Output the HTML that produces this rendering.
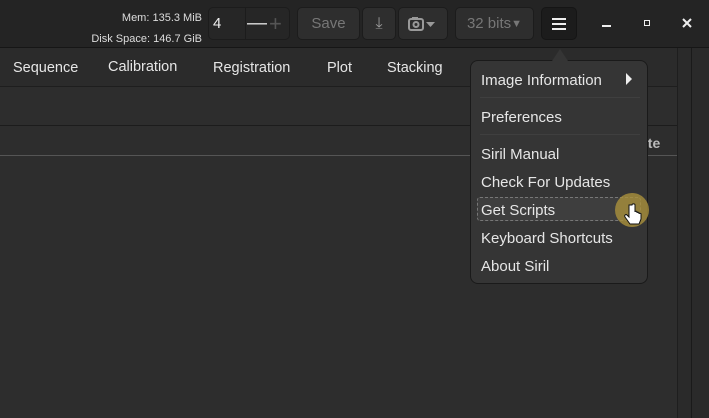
<!DOCTYPE html><html><head><style>
body{margin:0;width:709px;height:418px;background:#2d2d2d;font-family:"Liberation Sans",sans-serif;overflow:hidden;position:relative;color:#ddd}
.a{position:absolute}
.btn{position:absolute;top:7px;height:33px;background:#2e2e2e;border:1px solid #1c1c1c;border-radius:5px;box-sizing:border-box;color:#777;font-size:15px;display:flex;align-items:center;justify-content:center}
.mi{position:absolute;left:481px;font-size:15px;color:#e6e6e6}
.tab{position:absolute;font-size:14.5px;color:#e6e6e6}
</style></head><body>
<div class="a" style="left:0;top:0;width:709px;height:47px;background:#242424;border-bottom:1px solid #161616"></div>
<div class="a" style="left:0;top:48px;width:709px;height:38px;background:#2b2b2b;border-bottom:1px solid #1e1e1e"></div>
<div class="a" style="right:507px;top:8px;font-size:11px;color:#ddd;text-align:right;line-height:21px;width:200px">Mem: 135.3 MiB<br>Disk Space: 146.7 GiB</div>
<div class="btn" style="left:208px;width:82px;justify-content:flex-start;padding-left:4px;color:#eee;background:#262626">4<span style="position:absolute;left:36px;top:0;height:31px;width:1px;background:#1c1c1c"></span><span style="position:absolute;left:38px;font-size:20px;color:#ddd">—</span><span style="position:absolute;left:60px;font-size:22px;color:#555">+</span></div>
<div class="btn" style="left:297px;width:63px">Save</div>
<div class="btn" style="left:362px;width:34px;color:#999;font-size:16px">⤓</div>
<div class="btn" style="left:398px;width:50px;color:#999"><svg width="30" height="16"><rect x="1" y="3" width="14" height="11" rx="2" fill="none" stroke="#999" stroke-width="2"/><rect x="4" y="1" width="6" height="3" fill="#999"/><circle cx="8" cy="8.5" r="2.5" fill="none" stroke="#999" stroke-width="2"/><path d="M18 6h9l-4.5 5z" fill="#999"/></svg></div>
<div class="btn" style="left:455px;width:79px">32 bits<span style="font-size:11px">▼</span></div>
<div class="btn" style="left:541px;width:36px;background:#1c1c1c;border-color:#151515"><svg width="14" height="12"><path d="M0 1h14M0 6h14M0 11h14" stroke="#eee" stroke-width="2"/></svg></div>
<div class="a" style="left:602px;top:25px;width:9px;height:2px;background:#eee"></div>
<div class="a" style="left:644px;top:20px;width:6px;height:6px;border:1.5px solid #eee;box-sizing:border-box"></div>
<svg class="a" style="left:682px;top:18px" width="10" height="10"><path d="M1 1L9 9M9 1L1 9" stroke="#eee" stroke-width="2"/></svg>
<div class="tab" style="top:60px;left:13px">Sequence</div>
<div class="tab" style="top:59px;left:108px">Calibration</div>
<div class="tab" style="top:60px;left:213px">Registration</div>
<div class="tab" style="top:60px;left:327px">Plot</div>
<div class="tab" style="top:60px;left:387px">Stacking</div>
<div class="a" style="left:0;top:125px;width:678px;height:1px;background:#1c1c1c"></div>
<div class="a" style="left:0;top:155px;width:678px;height:1px;background:#555"></div>
<div class="a" style="left:640px;top:135px;font-size:14px;font-weight:bold;color:#bbb">ate</div>
<div class="a" style="left:677px;top:48px;width:1px;height:370px;background:#1e1e1e"></div>
<div class="a" style="left:678px;top:48px;width:31px;height:370px;background:#2a2a2a"></div>
<div class="a" style="left:691px;top:48px;width:1px;height:370px;background:#1a1a1a"></div>
<div class="a" style="left:470px;top:60px;width:178px;height:224px;background:#353535;border:1px solid #1a1a1a;border-radius:8px;box-sizing:border-box"></div>
<div class="a" style="left:552px;top:49px;width:0;height:0;border-left:8px solid transparent;border-right:8px solid transparent;border-bottom:12px solid #353535"></div>
<div class="mi" style="top:72px">Image Information</div>
<div class="a" style="left:626px;top:73px;border-top:6px solid transparent;border-bottom:6px solid transparent;border-left:6px solid #eee"></div>
<div class="a" style="left:480px;top:97px;width:160px;height:1px;background:#3f3f3f"></div>
<div class="mi" style="top:109px">Preferences</div>
<div class="a" style="left:480px;top:134px;width:160px;height:1px;background:#3f3f3f"></div>
<div class="mi" style="top:146px">Siril Manual</div>
<div class="mi" style="top:174px">Check For Updates</div>
<div class="a" style="left:477px;top:197px;width:164px;height:24px;border:1px dashed #777;background:#3e3e3e;border-radius:3px;box-sizing:border-box"></div>
<div class="mi" style="top:202px">Get Scripts</div>
<div class="mi" style="top:230px">Keyboard Shortcuts</div>
<div class="mi" style="top:258px">About Siril</div>
<div class="a" style="left:615px;top:193px;width:34px;height:34px;border-radius:50%;background:rgba(170,145,60,0.8)"></div>
<svg class="a" style="left:624px;top:203px" width="18" height="24"><path d="M5 2v12l-2-2c-1-1-3 0-2 2l5 7h9l2-5v-5c0-1-2-1-2 0v-1c0-1-2-1-2 0v-1c0-1-2-1-2 0V2c0-1.5-3-1.5-3 0z" fill="#fff" stroke="#111" stroke-width="1"/></svg>
</body></html>
